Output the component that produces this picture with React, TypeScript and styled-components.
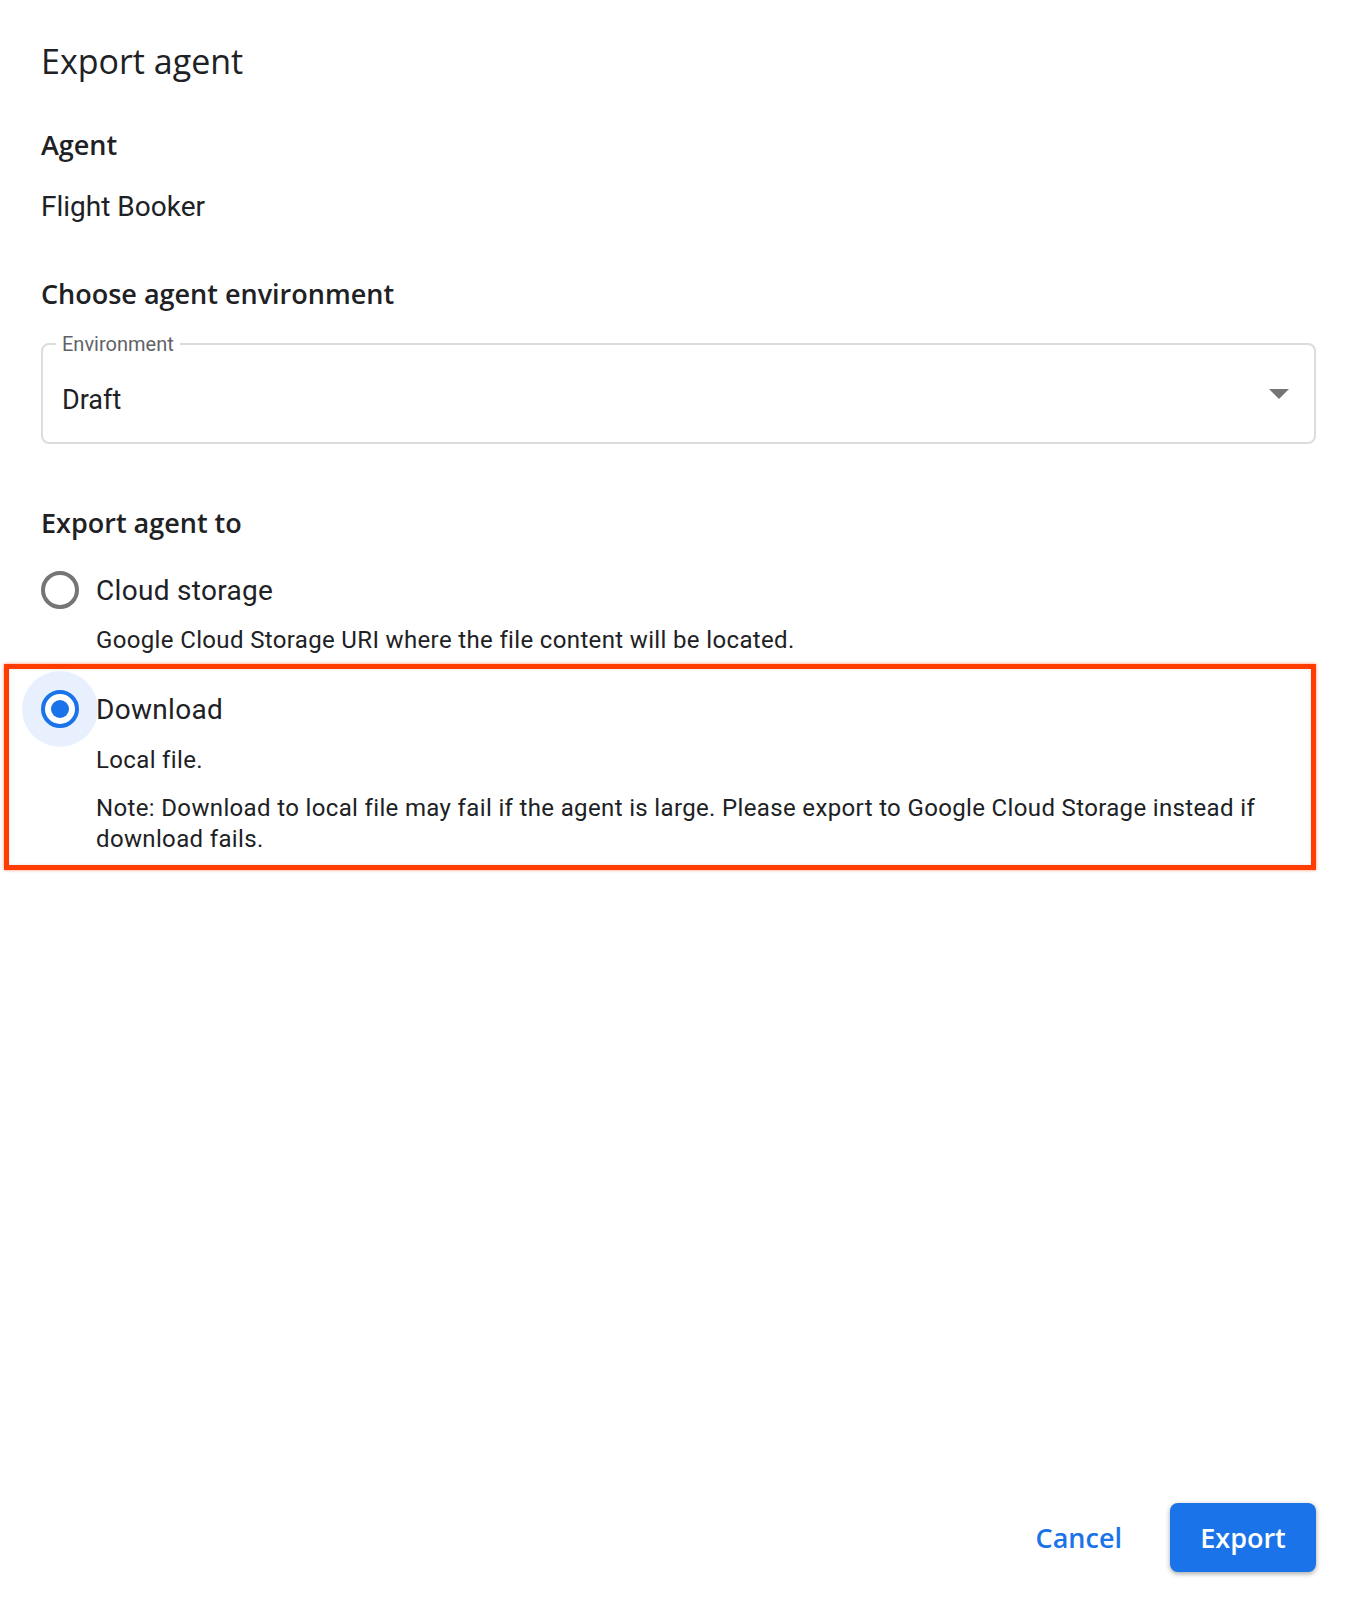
import React from 'react';
import styled, { createGlobalStyle } from 'styled-components';

const GlobalStyle = createGlobalStyle`
  body {
    margin: 0;
    background: #ffffff;
    color: #202124;
  }
`;

const heading = `"Open Sans", "Noto Sans", sans-serif`;
const body = `Roboto, "Liberation Sans", sans-serif`;

const Dialog = styled.div`
  display: flex;
  flex-direction: column;
  min-height: 1600px;
  box-sizing: border-box;
  padding: 41px 40px 28px 41px;
`;

const Title = styled.h1`
  margin: 0;
  font-family: ${heading};
  font-weight: 400;
  font-size: 34px;
  line-height: 40px;
  color: #202124;
`;

const SectionTitle = styled.h2<{ $top: number }>`
  margin: ${(p) => p.$top}px 0 0;
  font-family: ${heading};
  font-weight: 600;
  font-size: 27px;
  line-height: 32px;
  color: #202124;
`;

const Value = styled.div`
  margin-top: 28px;
  font-family: ${body};
  font-size: 28px;
  line-height: 36px;
  color: #202124;
`;

const Field = styled.fieldset`
  margin: 23px 0 0;
  padding: 0 18px 0 13px;
  border: 2px solid #dadce0;
  border-radius: 8px;
`;

const Legend = styled.legend`
  padding: 0 6px;
  font-family: ${body};
  font-size: 20px;
  line-height: 22px;
  color: #5f6368;
`;

const SelectRow = styled.div`
  display: flex;
  align-items: center;
  justify-content: space-between;
  height: 84px;
  padding: 3px 0 0 6px;
`;

const SelectValue = styled.span`
  font-family: ${body};
  font-size: 27px;
  color: #202124;
`;

const Caret = styled.span`
  width: 0;
  height: 0;
  border-left: 10px solid transparent;
  border-right: 10px solid transparent;
  border-top: 10px solid #757575;
  margin: -12px 7px 0 0;
`;

const Options = styled.div`
  margin-top: 31px;
  display: flex;
  flex-direction: column;
`;

const Highlight = styled.div`
  margin: 8px 0 0 -37px;
  padding: 20px 20px 10px 32px;
  border: 5px solid #ff3d00;
  box-shadow: 0 0 3px rgba(255, 61, 0, 0.6), inset 0 0 3px rgba(0, 0, 0, 0.12);
`;

const OptionRow = styled.label`
  display: flex;
  align-items: center;
  gap: 17px;
  height: 40px;
`;

const Radio = styled.span<{ $checked?: boolean }>`
  width: 38px;
  height: 38px;
  box-sizing: border-box;
  border-radius: 50%;
  border: 4px solid ${(p) => (p.$checked ? '#1a73e8' : '#757575')};
  box-shadow: ${(p) => (p.$checked ? '0 0 0 19px #e8f0fe' : 'none')};
  background: #fff;
  display: flex;
  align-items: center;
  justify-content: center;
  flex: none;

  &::after {
    content: '';
    display: ${(p) => (p.$checked ? 'block' : 'none')};
    width: 18px;
    height: 18px;
    border-radius: 50%;
    background: #1a73e8;
  }
`;

const OptionLabel = styled.span`
  font-family: ${body};
  font-size: 28px;
  color: #202124;
  letter-spacing: 0.3px;
`;

const Hint = styled.p<{ $top: number }>`
  margin: ${(p) => p.$top}px 0 0 55px;
  font-family: ${body};
  font-size: 24px;
  line-height: 31px;
  letter-spacing: 0.35px;
  color: #202124;
`;

const Actions = styled.div`
  margin-top: auto;
  display: flex;
  justify-content: flex-end;
  align-items: center;
  gap: 24px;
`;

const TextButton = styled.button`
  border: none;
  background: none;
  padding: 0 24px;
  height: 69px;
  font-family: ${heading};
  font-weight: 600;
  font-size: 27px;
  color: #1a73e8;
  cursor: pointer;
`;

const PrimaryButton = styled.button`
  border: none;
  width: 146px;
  height: 69px;
  border-radius: 8px;
  background: #1a73e8;
  color: #ffffff;
  font-family: ${heading};
  font-weight: 600;
  font-size: 27px;
  box-shadow: 0 2px 4px rgba(60, 64, 67, 0.35), 0 1px 6px rgba(60, 64, 67, 0.15);
  cursor: pointer;
`;

export default function App() {
  return (
    <>
      <GlobalStyle />
      <Dialog>
        <Title>Export agent</Title>

        <SectionTitle $top={48}>Agent</SectionTitle>
        <Value>Flight Booker</Value>

        <SectionTitle $top={53}>Choose agent environment</SectionTitle>
        <Field>
          <Legend>Environment</Legend>
          <SelectRow>
            <SelectValue>Draft</SelectValue>
            <Caret />
          </SelectRow>
        </Field>

        <SectionTitle $top={63}>Export agent to</SectionTitle>
        <Options>
          <OptionRow>
            <Radio />
            <OptionLabel>Cloud storage</OptionLabel>
          </OptionRow>
          <Hint $top={15}>Google Cloud Storage URI where the file content will be located.</Hint>

          <Highlight>
            <OptionRow>
              <Radio $checked />
              <OptionLabel>Download</OptionLabel>
            </OptionRow>
            <Hint $top={16}>Local file.</Hint>
            <Hint $top={17}>
              Note: Download to local file may fail if the agent is large. Please export to Google Cloud
              Storage instead if download fails.
            </Hint>
          </Highlight>
        </Options>

        <Actions>
          <TextButton>Cancel</TextButton>
          <PrimaryButton>Export</PrimaryButton>
        </Actions>
      </Dialog>
    </>
  );
}
